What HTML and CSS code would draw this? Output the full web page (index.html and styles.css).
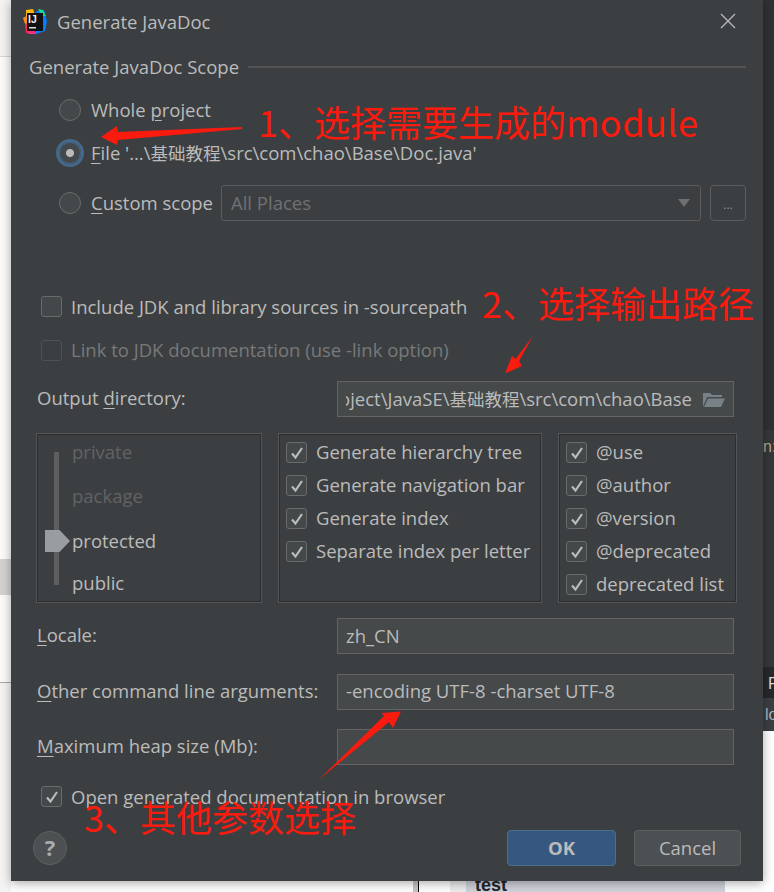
FILE: index.html
```html
<!DOCTYPE html>
<html lang="zh-CN">
<head>
    <meta charset="UTF-8">
    <title>Generate JavaDoc</title>
    <link rel="stylesheet" href="styles.css">
</head>
<body>
    <!-- windows behind the dialog -->
    <div class="desk">
        <div class="desk_left">
            <div class="left_top"></div>
            <div class="left_white"></div>
            <div class="left_gray"></div>
            <div class="left_white2"></div>
            <div class="left_bottom"></div>
        </div>
        <div class="desk_right">
            <div class="right_a"></div>
            <div class="right_b">n:</div>
            <div class="right_c">R</div>
            <div class="right_d">lo</div>
        </div>
        <div class="desk_bottom">
            <div class="bottom_gutter"></div>
            <div class="bottom_panel">test</div>
        </div>
    </div>

    <div class="dialog">
        <div class="titlebar">
            <svg class="logo" width="24" height="26" viewBox="0 0 24 26">
                <path d="M3 1 L10 0 L12 6 L3 8 Z" fill="#fdb60d"/>
                <path d="M0 9 L5 6 L6 16 L2 15 Z" fill="#ff8a1e"/>
                <path d="M2 14 L10 18 L12 25 L3 24 Z" fill="#fe2857"/>
                <path d="M10 20 L14 25 L5 25 Z" fill="#ff318c"/>
                <path d="M14 2 L21 1 L24 12 L22 22 L13 25 L12 4 Z" fill="#087cfa"/>
                <path d="M15 0 L20 1 L23 7 L19 7 Z" fill="#21d789"/>
                <rect x="4" y="4" width="16" height="18" fill="#111"/>
                <rect x="6" y="18" width="7" height="1.5" fill="#ddd"/>
            </svg>
            <span class="logo_text">IJ</span>
            <span class="title">Generate JavaDoc</span>
            <svg class="close" width="16" height="16" viewBox="0 0 16 16">
                <path d="M1 1 L15 15 M15 1 L1 15" stroke="#b4b6b8" stroke-width="1.4" fill="none"/>
            </svg>
        </div>

        <div class="scope">
            <div class="group_head">
                <span>Generate JavaDoc Scope</span>
                <div class="group_line"></div>
            </div>
            <div class="scope_list">
                <div class="radio_row"><span class="radio"></span><span>Whole <u>p</u>roject</span></div>
                <div class="radio_row"><span class="radio radio_on"></span><span><u>F</u>ile '...\<span class="cjk">基础教程</span>\src\com\chao\Base\Doc.java'</span></div>
                <div class="radio_row radio_row_big">
                    <span class="radio"></span><span><u>C</u>ustom scope</span>
                    <div class="combo">
                        <span>All Places</span>
                        <span class="combo_arrow"></span>
                    </div>
                    <div class="more_btn">...</div>
                </div>
            </div>
        </div>

        <div class="form">
            <div class="check_row first_check"><span class="box"></span><span>Include JDK and library sources in -sourcepath</span></div>
            <div class="check_row second_check dim"><span class="box box_dim"></span><span>Link to JDK documentation (use -link option)</span></div>

            <div class="field_row output_row">
                <label>Output <u>d</u>irectory:</label>
                <div class="field">
                    <div class="path_text"><span>project\JavaSE\<span class="cjk">基础教程</span>\src\com\chao\Base</span></div>
                    <svg class="folder" width="23" height="17" viewBox="0 0 23 17">
                        <path d="M1 16 L1 2 L8 2 L10 4 L20 4 L20 6 L5 6 Z" fill="#9aa7b0" opacity="0.6"/>
                        <path d="M2 16 L6 7.5 L23 7.5 L19 16 Z" fill="#9aa7b0" opacity="0.6"/>
                    </svg>
                </div>
            </div>

            <div class="panels">
                <div class="panel slider_panel">
                    <div class="track"></div>
                    <div class="thumb"></div>
                    <div class="levels">
                        <span class="level_off">private</span>
                        <span class="level_off">package</span>
                        <span class="level_on">protected</span>
                        <span>public</span>
                    </div>
                </div>
                <div class="panel check_panel">
                    <div class="opt"><span class="box"><svg class="tick" viewBox="0 0 14 14"><path d="M2 7.5 L5.5 11.5 L12 2"/></svg></span><span>Generate hierarchy tree</span></div>
                    <div class="opt"><span class="box"><svg class="tick" viewBox="0 0 14 14"><path d="M2 7.5 L5.5 11.5 L12 2"/></svg></span><span>Generate navigation bar</span></div>
                    <div class="opt"><span class="box"><svg class="tick" viewBox="0 0 14 14"><path d="M2 7.5 L5.5 11.5 L12 2"/></svg></span><span>Generate index</span></div>
                    <div class="opt"><span class="box"><svg class="tick" viewBox="0 0 14 14"><path d="M2 7.5 L5.5 11.5 L12 2"/></svg></span><span>Separate index per letter</span></div>
                </div>
                <div class="panel check_panel">
                    <div class="opt"><span class="box"><svg class="tick" viewBox="0 0 14 14"><path d="M2 7.5 L5.5 11.5 L12 2"/></svg></span><span>@use</span></div>
                    <div class="opt"><span class="box"><svg class="tick" viewBox="0 0 14 14"><path d="M2 7.5 L5.5 11.5 L12 2"/></svg></span><span>@author</span></div>
                    <div class="opt"><span class="box"><svg class="tick" viewBox="0 0 14 14"><path d="M2 7.5 L5.5 11.5 L12 2"/></svg></span><span>@version</span></div>
                    <div class="opt"><span class="box"><svg class="tick" viewBox="0 0 14 14"><path d="M2 7.5 L5.5 11.5 L12 2"/></svg></span><span>@deprecated</span></div>
                    <div class="opt"><span class="box"><svg class="tick" viewBox="0 0 14 14"><path d="M2 7.5 L5.5 11.5 L12 2"/></svg></span><span>deprecated list</span></div>
                </div>
            </div>

            <div class="field_row locale_row">
                <label><u>L</u>ocale:</label>
                <div class="field">zh_CN</div>
            </div>
            <div class="field_row other_row">
                <label><u>O</u>ther command line arguments:</label>
                <div class="field">-encoding UTF-8 -charset UTF-8</div>
            </div>
            <div class="field_row other_row">
                <label><u>M</u>aximum heap size (Mb):</label>
                <div class="field"></div>
            </div>

            <div class="check_row open_check"><span class="box"><svg class="tick" viewBox="0 0 14 14"><path d="M2 7.5 L5.5 11.5 L12 2"/></svg></span><span>Open <u>g</u>enerated documentation in browser</span></div>
        </div>

        <div class="footer">
            <div class="help">?</div>
            <div class="btn btn_ok">OK</div>
            <div class="btn btn_cancel">Cancel</div>
        </div>
    </div>

    <!-- red notes drawn on top of the screenshot -->
    <svg class="arrows" width="774" height="892" viewBox="0 0 774 892">
        <polygon points="242,127 242,129 118,140 117,145 101,137 117,126 118,132" fill="#fb1a0e"/>
        <polygon points="533,336 519,361 522,366 505,373.5 512,356 515.5,359" fill="#fb1a0e"/>
        <polygon points="319,779.5 384,716 381.5,713 401,711.5 393,728 389,722" fill="#fb1a0e"/>
    </svg>
    <div class="note note1">1、选择需要生成的<span class="note_latin">module</span></div>
    <div class="note note2">2、选择输出路径</div>
    <div class="note note3">3、其他参数选择</div>
</body>
</html>
```

FILE: styles.css
```css
html, body {
    margin: 0;
    height: 892px;
    overflow: hidden;
    background: #fff;
}
body {
    position: relative;
    font-family: "Open Sans", "Noto Sans CJK SC", sans-serif;
    font-size: 18.5px;
    color: #bbbbbb;
}
u {
    text-underline-offset: 3px;
}
.cjk {
    font-size: 17.5px;
}

/* behind the dialog */
.desk {
    position: absolute;
    left: 0;
    top: 0;
    width: 774px;
    height: 892px;
}
.desk_left {
    position: absolute;
    left: 0;
    top: 0;
    width: 11px;
    height: 892px;
    display: flex;
    flex-direction: column;
}
.left_top {
    height: 56px;
    background: #f3f3f3;
    border-bottom: 1px solid #d6d6d6;
}
.left_white {
    height: 502px;
    background: #fbfbfb;
}
.left_gray {
    height: 36px;
    background: #d2d2d2;
}
.left_white2 {
    height: 87px;
    background: #fbfbfb;
    border-bottom: 1px solid #a8a8a8;
}
.left_bottom {
    flex: 1;
    background: #f4f4f4;
}
.desk_right {
    position: absolute;
    left: 763px;
    top: 0;
    width: 11px;
    height: 892px;
    overflow: hidden;
    display: flex;
    flex-direction: column;
    font-family: "Liberation Sans", sans-serif;
    font-size: 16px;
    white-space: nowrap;
}
.right_a {
    height: 430px;
    background: #2f3133;
}
.right_b {
    height: 237px;
    padding-top: 8px;
    box-sizing: border-box;
    background: #353739;
    color: #b4a78c;
}
.right_c {
    height: 31px;
    line-height: 34px;
    padding-left: 5px;
    background: #26282a;
    color: #d8dce0;
}
.right_d {
    height: 33px;
    line-height: 34px;
    padding-left: 2px;
    background: #3c3f41;
    color: #a9b7c6;
}
.desk_bottom {
    position: absolute;
    left: 413px;
    top: 860px;
    width: 312px;
    height: 32px;
    display: flex;
}
.bottom_gutter {
    width: 53px;
    box-sizing: border-box;
    border-left: 5px solid #c4c4c4;
    background: linear-gradient(90deg, #000 0, #000 1px, #fff 1px, #fff 32px, #ececec 32px);
}
.bottom_panel {
    flex: 1;
    background: #cfd2d9;
    padding: 15px 0 0 9px;
    font-family: "Liberation Sans", sans-serif;
    font-weight: bold;
    font-size: 18px;
    color: #23262b;
}

/* dialog */
.dialog {
    position: relative;
    margin-left: 11px;
    width: 752px;
    height: 881px;
    background: #3c3f41;
    box-shadow: 0 2px 10px rgba(0, 0, 0, 0.35);
}
.titlebar {
    position: relative;
    height: 44px;
    display: flex;
    align-items: center;
    padding-left: 12px;
}
.logo {
    flex: none;
}
.logo_text {
    position: absolute;
    left: 17px;
    top: 13px;
    font-family: "Liberation Sans", sans-serif;
    font-size: 10.5px;
    font-weight: bold;
    line-height: 12px;
    color: #eee;
}
.title {
    margin: -1px 0 0 10px;
}
.close {
    position: absolute;
    right: 27px;
    top: 13px;
}

.scope {
    padding: 0 17px 0 18px;
    margin-top: 11px;
}
.group_head {
    display: flex;
    align-items: center;
    height: 24px;
    gap: 9px;
}
.group_head > span,
.radio_row > span + span,
.second_check > span + span,
.opt > span + span {
    margin-top: -2px;
}
.group_line {
    flex: 1;
    height: 2px;
    background: #515355;
}
.scope_list {
    margin-top: 20px;
    padding-left: 30px;
    display: flex;
    flex-direction: column;
    gap: 21px;
}
.radio_row {
    height: 22px;
    display: flex;
    align-items: center;
    gap: 10px;
    white-space: nowrap;
}
.radio_row_big {
    height: 36px;
}
.radio {
    flex: none;
    width: 22px;
    height: 22px;
    box-sizing: border-box;
    border: 1px solid #6b6b6b;
    border-radius: 50%;
    background: #43494a;
}
.radio_on {
    background: radial-gradient(circle, #bbb 0, #bbb 3.5px, #43494a 4.5px);
    border-color: #46688a;
    box-shadow: 0 0 0 3px #46688a;
}
.combo {
    flex: none;
    width: 480px;
    height: 36px;
    margin-left: -2px;
    box-sizing: border-box;
    border: 1px solid #5a5c5e;
    border-radius: 3px;
    padding: 0 10px 2px 9px;
    display: flex;
    align-items: center;
    justify-content: space-between;
    color: #6f7173;
}
.combo_arrow {
    width: 0;
    height: 0;
    margin-top: 2px;
    border-left: 6.5px solid transparent;
    border-right: 6.5px solid transparent;
    border-top: 8px solid #6e7072;
}
.more_btn {
    flex: none;
    width: 36px;
    height: 36px;
    margin-left: -1px;
    box-sizing: border-box;
    border: 1px solid #5a5c5e;
    border-radius: 4px;
    text-align: center;
    line-height: 37px;
    font-size: 12px;
    color: #8a8c8e;
}

.form {
    padding: 0 29px 0 26px;
}
.check_row {
    height: 22px;
    padding-left: 4px;
    display: flex;
    align-items: center;
    gap: 9px;
}
.first_check {
    margin-top: 74px;
}
.second_check {
    margin-top: 22px;
}
.dim {
    color: #77797b;
}
.open_check {
    margin-top: 20.5px;
}
.box {
    flex: none;
    width: 21px;
    height: 21px;
    box-sizing: border-box;
    border: 1px solid #6b6b6b;
    border-radius: 3px;
    background: #43494a;
    display: flex;
    align-items: center;
    justify-content: center;
}
.box_dim {
    border-color: #4f5254;
    background: #3c3f41;
}
.tick {
    width: 14px;
    height: 14px;
    fill: none;
    stroke: #bcbcbc;
    stroke-width: 2.2;
}

.field_row {
    display: flex;
    align-items: center;
    justify-content: space-between;
}
.field_row label {
    margin-top: -3px;
}
.output_row {
    margin-top: 20px;
}
.locale_row {
    margin-top: 17px;
}
.other_row {
    margin-top: 19.5px;
}
.field {
    width: 397px;
    height: 36px;
    box-sizing: border-box;
    border: 1px solid #646464;
    background: #45494a;
    padding: 0 8px 2px;
    display: flex;
    align-items: center;
}
.path_text {
    flex: 1;
    min-width: 0;
    overflow: hidden;
    display: flex;
    justify-content: flex-end;
    white-space: nowrap;
}
.folder {
    flex: none;
    margin: 2px 0 0 10px;
}

.panels {
    margin: 17px -2px 0 0;
    display: grid;
    grid-template-columns: 224px 262px 177px;
    column-gap: 18px;
    height: 167px;
}
.panel {
    position: relative;
    box-sizing: border-box;
    border: 1px solid #2b2d2e;
    outline: 1px solid #535557;
}
.track {
    position: absolute;
    left: 16px;
    top: 17px;
    width: 5px;
    height: 133px;
    background: #5e5f60;
}
.thumb {
    position: absolute;
    left: 7px;
    top: 95px;
    width: 25px;
    height: 22px;
    background: #9a9d9f;
    clip-path: polygon(0 0, 58% 0, 100% 50%, 58% 100%, 0 100%);
}
.levels {
    position: absolute;
    left: 34px;
    top: 4px;
    display: flex;
    flex-direction: column;
}
.levels span {
    height: 25px;
    line-height: 25px;
    margin-bottom: 19px;
}
.levels .level_on {
    margin-bottom: 17px;
}
.levels .level_off + .level_off {
    margin-bottom: 20px;
}
.level_off {
    color: #616365;
}
.check_panel {
    padding: 1px 6px 0;
}
.opt {
    height: 33px;
    display: flex;
    align-items: center;
    gap: 9px;
}

.footer {
    position: relative;
    margin-top: 22px;
    padding-right: 22px;
    display: flex;
    justify-content: flex-end;
    gap: 18px;
}
.help {
    position: absolute;
    left: 22px;
    top: 1px;
    width: 34px;
    height: 34px;
    box-sizing: border-box;
    border: 1px solid #5e6060;
    border-radius: 50%;
    background: #4c5052;
    text-align: center;
    line-height: 31px;
    font-size: 22px;
    font-weight: bold;
    color: #a9abad;
}
.btn {
    height: 36px;
    box-sizing: border-box;
    border-radius: 4px;
    text-align: center;
    line-height: 34px;
}
.btn_ok {
    width: 109px;
    background: #365880;
    border: 1px solid #4c708c;
    font-weight: bold;
}
.btn_cancel {
    width: 107px;
    background: #4c5052;
    border: 1px solid #5e6060;
}

/* annotations */
.arrows {
    position: absolute;
    left: 0;
    top: 0;
}
.note {
    position: absolute;
    font-family: "Noto Sans CJK SC", sans-serif;
    font-size: 36px;
    line-height: 44px;
    color: #fb1a0e;
    white-space: nowrap;
}
.note_latin {
    letter-spacing: 0.5px;
}
.note1 {
    left: 258px;
    top: 99px;
}
.note2 {
    left: 482px;
    top: 280px;
}
.note3 {
    left: 84px;
    top: 794px;
}
```
